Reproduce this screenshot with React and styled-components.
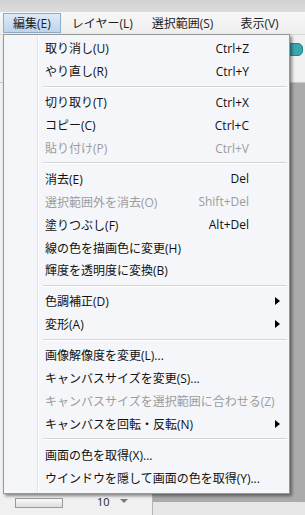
import styled, { createGlobalStyle } from "styled-components";

const GlobalStyle = createGlobalStyle`
  body {
    margin: 0;
    background: #f0f0f0;
    font-family: "Open Sans", "Noto Sans CJK JP", sans-serif;
  }
`;

const Window = styled.div`
  position: relative;
  width: 305px;
  height: 515px;
  overflow: hidden;
  display: flex;
  flex-direction: column;
  background: #f0f0f0;
`;

const TitleStrip = styled.div`
  height: 12px;
  background: linear-gradient(#d2d2d2, #dcdcdc);
`;

const MenuBar = styled.div`
  height: 22px;
  display: flex;
  align-items: center;
  padding-left: 3px;
  background: linear-gradient(#f7f7f7, #eeeeee);
  border-bottom: 1px solid #d8d8d8;
`;

const MenuTitle = styled.div`
  flex-shrink: 0;
  height: 20px;
  box-sizing: border-box;
  display: flex;
  align-items: center;
  white-space: nowrap;
  padding: 0 ${(p) => p.$pad ?? 9}px;
  margin-right: ${(p) => p.$gap || 0}px;
  font-size: 12px;
  color: #1e1e1e;
  border: 1px solid ${(p) => (p.$active ? "#8eabc9" : "transparent")};
  background: ${(p) =>
    p.$active ? "linear-gradient(#dceaf8, #bcd4ec)" : "transparent"};
`;

const Toolbar = styled.div`
  height: 48px;
  display: flex;
  justify-content: flex-end;
  padding: 8px 2px 0 0;
  box-sizing: border-box;
  background: #f0f0f0;
  border-bottom: 1px solid #c8c8c8;
`;

const Chip = styled.div`
  width: 14px;
  height: 11px;
  border-radius: 5px;
  background: #3aa6b0;
  border: 1px solid #23838c;
`;

const Body = styled.div`
  flex: 1;
  display: flex;
`;

const SidePanel = styled.div`
  width: 152px;
  display: flex;
  flex-direction: column;
  justify-content: flex-end;
  background: #f0f0f0;
  border-right: 1px solid #b4b4b4;
`;

const SliderRow = styled.div`
  height: 19px;
  display: flex;
  align-items: flex-start;
  gap: 10px;
  padding-left: 15px;
  font-size: 11px;
  line-height: 12px;
  color: #222;
`;

const Slider = styled.div`
  width: 46px;
  height: 8px;
  margin-top: 2px;
  border: 1px solid #9a9a9a;
  background: linear-gradient(#fafafa, #dedede);
`;

const Value = styled.span`
  margin-left: 24px;
`;

const DownArrow = styled.span`
  width: 0;
  height: 0;
  margin-top: 3px;
  border-left: 4px solid transparent;
  border-right: 4px solid transparent;
  border-top: 4px solid #7a7a7a;
`;

const Canvas = styled.div`
  flex: 1;
  display: flex;
  flex-direction: column;
`;

const CanvasArea = styled.div`
  flex: 1;
  background: #ababab;
`;

const StatusArea = styled.div`
  height: 13px;
  background: #e6e6e6;
`;

const Dropdown = styled.div`
  position: absolute;
  left: 3px;
  top: 34px;
  width: 287px;
  box-sizing: border-box;
  padding: 2px 2px 4px 1px;
  background: #f4f6f9;
  border: 1px solid #979797;
  box-shadow: 2px 2px 3px rgba(0, 0, 0, 0.45);
  font-size: 12px;
  color: #111;
  background-image: linear-gradient(
    to right,
    transparent 33px,
    #e2e3e3 33px,
    #e2e3e3 34px,
    #ffffff 34px,
    #ffffff 35px,
    transparent 35px
  );
`;

const Item = styled.div`
  height: 22.9px;
  display: grid;
  grid-template-columns: 1fr auto 38px;
  align-items: center;
  padding-left: 40px;
  color: ${(p) => (p.$disabled ? "#9c9c9c" : "#111")};
  white-space: nowrap;
`;

const Shortcut = styled.span`
  text-align: right;
`;

const Arrow = styled.span`
  justify-self: end;
  margin-right: 7px;
  width: 0;
  height: 0;
  border-top: 4px solid transparent;
  border-bottom: 4px solid transparent;
  border-left: 5px solid #000;
`;

const Separator = styled.div`
  margin: 3px 0 3px 38px;
  height: 0;
  border-top: 1px solid #d5d5d5;
  border-bottom: 1px solid #ffffff;
`;

const groups = [
  [
    { label: "取り消し(U)", key: "Ctrl+Z" },
    { label: "やり直し(R)", key: "Ctrl+Y" },
  ],
  [
    { label: "切り取り(T)", key: "Ctrl+X" },
    { label: "コピー(C)", key: "Ctrl+C" },
    { label: "貼り付け(P)", key: "Ctrl+V", disabled: true },
  ],
  [
    { label: "消去(E)", key: "Del" },
    { label: "選択範囲外を消去(O)", key: "Shift+Del", disabled: true },
    { label: "塗りつぶし(F)", key: "Alt+Del" },
    { label: "線の色を描画色に変更(H)" },
    { label: "輝度を透明度に変換(B)" },
  ],
  [
    { label: "色調補正(D)", sub: true },
    { label: "変形(A)", sub: true },
  ],
  [
    { label: "画像解像度を変更(L)..." },
    { label: "キャンバスサイズを変更(S)..." },
    { label: "キャンバスサイズを選択範囲に合わせる(Z)", disabled: true },
    { label: "キャンバスを回転・反転(N)", sub: true },
  ],
  [
    { label: "画面の色を取得(X)..." },
    { label: "ウインドウを隠して画面の色を取得(Y)..." },
  ],
];

function App() {
  return (
    <>
      <GlobalStyle />
      <Window>
        <TitleStrip />
        <MenuBar>
          <MenuTitle $active $pad={9} $gap={10}>
            編集(E)
          </MenuTitle>
          <MenuTitle $pad={0} $gap={17}>
            レイヤー(L)
          </MenuTitle>
          <MenuTitle $pad={0} $gap={25}>
            選択範囲(S)
          </MenuTitle>
          <MenuTitle $pad={0}>表示(V)</MenuTitle>
        </MenuBar>
        <Toolbar>
          <Chip />
        </Toolbar>
        <Body>
          <SidePanel>
            <SliderRow>
              <Slider />
              <Value>10</Value>
              <DownArrow />
            </SliderRow>
          </SidePanel>
          <Canvas>
            <CanvasArea />
            <StatusArea />
          </Canvas>
        </Body>

        <Dropdown>
          {groups.map((group, gi) => (
            <div key={gi}>
              {gi > 0 && <Separator />}
              {group.map((item) => (
                <Item key={item.label} $disabled={item.disabled}>
                  <span>{item.label}</span>
                  <Shortcut>{item.key}</Shortcut>
                  {item.sub ? <Arrow /> : <span />}
                </Item>
              ))}
            </div>
          ))}
        </Dropdown>
      </Window>
    </>
  );
}

export default App;
